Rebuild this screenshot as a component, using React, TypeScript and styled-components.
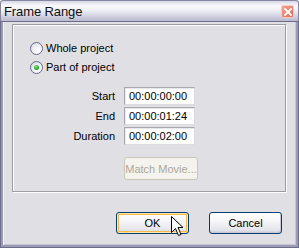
import styled, { createGlobalStyle } from 'styled-components';

const GlobalStyle = createGlobalStyle`
	html,
	body {
		margin: 0;
		padding: 0;
		background: #ffffff;
	}

	* {
		box-sizing: border-box;
	}
`;

const fields = [
	{ label: 'Start', value: '00:00:00:00' },
	{ label: 'End', value: '00:00:01:24' },
	{ label: 'Duration', value: '00:00:02:00' },
];

function App() {
	return (
		<>
			<GlobalStyle />
			<Window>
				<TitleBar>
					<Title>Frame Range</Title>
					<CloseButton aria-label="Close">
						<svg width="8" height="8" viewBox="0 0 8 8">
							<path d="M1 1 L7 7 M7 1 L1 7" stroke="#ffffff" strokeWidth="1.8" strokeLinecap="square" />
						</svg>
					</CloseButton>
				</TitleBar>
				<Frame>
					<GroupBox>
						<RadioRow>
							<Radio />
							<span>Whole project</span>
						</RadioRow>
						<RadioRow>
							<Radio $checked />
							<span>Part of project</span>
						</RadioRow>
						<FieldGrid>
							{fields.map((f) => (
								<FieldRow key={f.label}>
									<FieldLabel>{f.label}</FieldLabel>
									<TextField>{f.value}</TextField>
								</FieldRow>
							))}
							<FieldRow>
								<span />
								<MatchButton disabled>Match Movie...</MatchButton>
							</FieldRow>
						</FieldGrid>
					</GroupBox>
					<Footer>
						<Button $default>OK</Button>
						<Button>Cancel</Button>
					</Footer>
					<Cursor width="13" height="21" viewBox="0 0 13 21">
						<path
							d="M0.5 0.5 L0.5 16.5 L4.5 12.5 L7.5 19.5 L10 18.5 L7 11.5 L12 11.5 Z"
							fill="#ffffff"
							stroke="#000000"
							strokeWidth="1"
						/>
					</Cursor>
				</Frame>
			</Window>
		</>
	);
}

export default App;

const Window = styled.div`
	width: 299px;
	height: 248px;
	display: flex;
	flex-direction: column;
	font-family: 'Liberation Sans', Arial, sans-serif;
	font-size: 11px;
	color: #000000;
`;

const TitleBar = styled.div`
	height: 21px;
	flex: none;
	display: flex;
	align-items: center;
	justify-content: space-between;
	padding: 0 4px 0 3px;
	border: 1px solid #8686a2;
	border-bottom: none;
	border-radius: 3px 3px 0 0;
	background: linear-gradient(#d8d8e6 0%, #fbfbfd 25%, #ececf3 50%, #d3d3e2 75%, #b9b9cf 100%);
`;

const Title = styled.span`
	font-size: 13px;
	color: #101010;
	letter-spacing: -0.1px;
`;

const CloseButton = styled.div`
	width: 13px;
	height: 13px;
	display: flex;
	align-items: center;
	justify-content: center;
	margin-top: 1px;
	border: 1px solid #f4c9c2;
	border-radius: 2px;
	background: linear-gradient(135deg, #f2a596 0%, #e9806e 60%, #de6a58 100%);
`;

const Frame = styled.div`
	position: relative;
	flex: 1;
	display: flex;
	flex-direction: column;
	padding: 3px 0 0 9px;
	background: #e0dfe3;
	border: 3px solid #9a9ab4;
	border-top: none;
	box-shadow: inset 1px 0 0 #f4f4f8, inset -1px -1px 0 #c4c4d2;
	outline: 1px solid #6d6d8a;
	outline-offset: -1px;
`;

const GroupBox = styled.div`
	width: 274px;
	height: 168px;
	display: flex;
	flex-direction: column;
	padding: 16px 0 0 17px;
	border: 1px solid #9d9ca1;
	box-shadow: inset 1px 1px 0 #ffffff, 1px 1px 0 #ffffff;
`;

const RadioRow = styled.label`
	height: 14px;
	display: flex;
	align-items: center;
	gap: 3px;
	margin-bottom: 5px;
`;

const Radio = styled.span<{ $checked?: boolean }>`
	position: relative;
	width: 13px;
	height: 13px;
	flex: none;
	border: 1px solid #6a6a8c;
	border-radius: 50%;
	background: radial-gradient(circle at 65% 70%, #ffffff 0%, #f0f0f4 45%, #cfcfda 100%);

	&::after {
		content: '';
		display: ${({ $checked }) => ($checked ? 'block' : 'none')};
		position: absolute;
		left: 3px;
		top: 3px;
		width: 5px;
		height: 5px;
		border-radius: 50%;
		background: radial-gradient(circle at 40% 35%, #8ae48a 0%, #2aad2a 55%, #138a13 100%);
	}
`;

const FieldGrid = styled.div`
	display: flex;
	flex-direction: column;
	gap: 2px;
	margin-top: 8px;
`;

const FieldRow = styled.div`
	display: grid;
	grid-template-columns: 85px 71px;
	column-gap: 9px;
	align-items: center;

	&:last-child {
		margin-top: 10px;
	}
`;

const FieldLabel = styled.span`
	text-align: right;
`;

const TextField = styled.div`
	height: 18px;
	display: flex;
	align-items: center;
	padding-left: 4px;
	background: #ffffff;
	border: 1px solid #a9a8ad;
	border-right-color: #dcdbe0;
	border-bottom-color: #dcdbe0;
	box-shadow: inset 1px 1px 0 #e8e8ec;
`;

const MatchButton = styled.button`
	width: 74px;
	height: 23px;
	padding: 0;
	font-family: 'Liberation Sans', Arial, sans-serif;
	font-size: 11px;
	color: #aca899;
	background: #f4f3ee;
	border: 1px solid #c9c7ba;
	border-radius: 3px;
`;

const Footer = styled.div`
	display: flex;
	justify-content: flex-end;
	gap: 20px;
	padding-right: 14px;
	margin-top: 20px;
`;

const Button = styled.button<{ $default?: boolean }>`
	width: 73px;
	height: 22px;
	padding: 0;
	font-family: 'Liberation Sans', Arial, sans-serif;
	font-size: 11px;
	color: #000000;
	border: 1px solid #003c74;
	border-radius: 3px;
	background: linear-gradient(#ffffff 0%, #f6f6f8 40%, #e4e4ec 85%, #c9c9d8 100%);
	box-shadow: ${({ $default }) =>
		$default
			? 'inset 0 0 0 1px #ffe9a8, inset 0 0 0 2px #f8b84a'
			: 'inset -1px -1px 0 #c6c6d6'};
`;

const Cursor = styled.svg`
	position: absolute;
	left: 168px;
	top: 195px;
	pointer-events: none;
`;
